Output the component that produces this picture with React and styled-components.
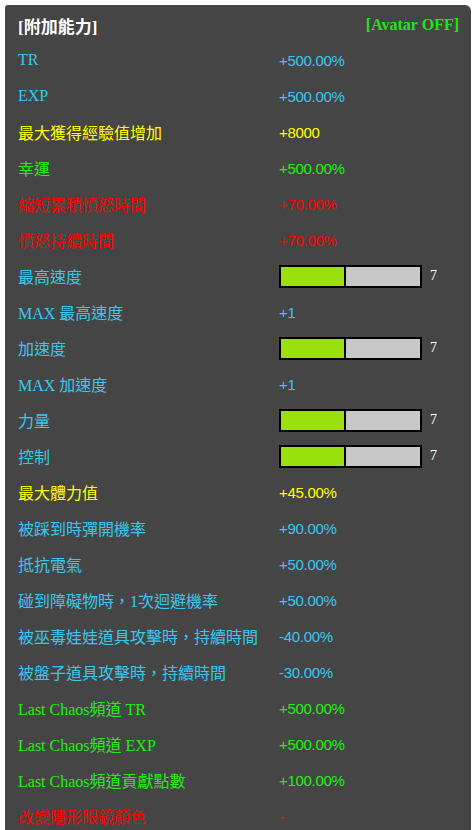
import React from "react"
import styled, { createGlobalStyle } from "styled-components"

const GlobalStyle = createGlobalStyle`
  html, body {
    margin: 0;
    padding: 0;
    background: #ffffff;
    overflow: hidden;
  }
`

const COLORS = {
  cyan: "#38c8ef",
  yellow: "#ffff00",
  green: "#22ee11",
  red: "#ff0000",
  white: "#ffffff",
}

const Page = styled.div`
  padding: 5px 4px 0 5px;
`

const Panel = styled.div`
  background: #454545;
  border-radius: 3px 6px 0 0;
  padding: 0 12px 0 13px;
  min-height: 840px;
  font-family: "Liberation Serif", "Noto Sans CJK TC", serif;
  font-size: 16px;
`

const Header = styled.div`
  display: flex;
  justify-content: space-between;
  align-items: center;
  height: 37px;
  padding-top: 3px;
  box-sizing: border-box;
  font-weight: bold;
`

const Title = styled.span`
  color: #ffffff;
  font-size: 17px;
  font-family: "Liberation Serif", "Noto Sans CJK TC", serif;
`

const Avatar = styled.span`
  color: #22e41a;
  font-family: "Liberation Serif", serif;
`

const Row = styled.div`
  display: grid;
  grid-template-columns: 261px 1fr;
  align-items: center;
  height: 36px;
`

const Label = styled.span`
  color: ${(p) => COLORS[p.$tone]};
  white-space: nowrap;
`

const Value = styled.span`
  color: ${(p) => COLORS[p.$tone]};
  font-family: "Liberation Sans", "Noto Sans CJK TC", sans-serif;
  font-size: 15px;
  letter-spacing: -0.3px;
`

const Gauge = styled.div`
  display: flex;
  align-items: center;
  gap: 8px;
`

const Bar = styled.div`
  display: flex;
  width: 143px;
  height: 23px;
  box-sizing: border-box;
  border: 2px solid #000000;
  background: #000000;
  gap: 2px;
`

const Fill = styled.div`
  width: 63px;
  background: #9ae00c;
`

const Rest = styled.div`
  flex: 1;
  background: #c8c8c8;
`

const Level = styled.span`
  color: #ffffff;
  font-family: "Liberation Serif", serif;
  font-size: 14px;
`

const rows = [
  { label: "TR", value: "+500.00%", tone: "cyan" },
  { label: "EXP", value: "+500.00%", tone: "cyan" },
  { label: "最大獲得經驗值增加", value: "+8000", tone: "yellow" },
  { label: "幸運", value: "+500.00%", tone: "green" },
  { label: "縮短累積憤怒時間", value: "+70.00%", tone: "red" },
  { label: "憤怒持續時間", value: "+70.00%", tone: "red" },
  { label: "最高速度", bar: 7, tone: "cyan" },
  { label: "MAX 最高速度", value: "+1", tone: "cyan" },
  { label: "加速度", bar: 7, tone: "cyan" },
  { label: "MAX 加速度", value: "+1", tone: "cyan" },
  { label: "力量", bar: 7, tone: "cyan" },
  { label: "控制", bar: 7, tone: "cyan" },
  { label: "最大體力值", value: "+45.00%", tone: "yellow" },
  { label: "被踩到時彈開機率", value: "+90.00%", tone: "cyan" },
  { label: "抵抗電氣", value: "+50.00%", tone: "cyan" },
  { label: "碰到障礙物時，1次迴避機率", value: "+50.00%", tone: "cyan" },
  { label: "被巫毒娃娃道具攻擊時，持續時間", value: "-40.00%", tone: "cyan" },
  { label: "被盤子道具攻擊時，持續時間", value: "-30.00%", tone: "cyan" },
  { label: "Last Chaos頻道 TR", value: "+500.00%", tone: "green" },
  { label: "Last Chaos頻道 EXP", value: "+500.00%", tone: "green" },
  { label: "Last Chaos頻道貢獻點數", value: "+100.00%", tone: "green" },
  { label: "改變隱形眼鏡顏色", value: "-", tone: "red" },
]

const App = () => {
  return (
    <Page>
      <GlobalStyle />
      <Panel>
        <Header>
          <Title>[附加能力]</Title>
          <Avatar>[Avatar OFF]</Avatar>
        </Header>
        {rows.map((r) => (
          <Row key={r.label}>
            <Label $tone={r.tone}>{r.label}</Label>
            {r.bar ? (
              <Gauge>
                <Bar>
                  <Fill />
                  <Rest />
                </Bar>
                <Level>{r.bar}</Level>
              </Gauge>
            ) : (
              <Value $tone={r.tone}>{r.value}</Value>
            )}
          </Row>
        ))}
      </Panel>
    </Page>
  )
}

export default App
